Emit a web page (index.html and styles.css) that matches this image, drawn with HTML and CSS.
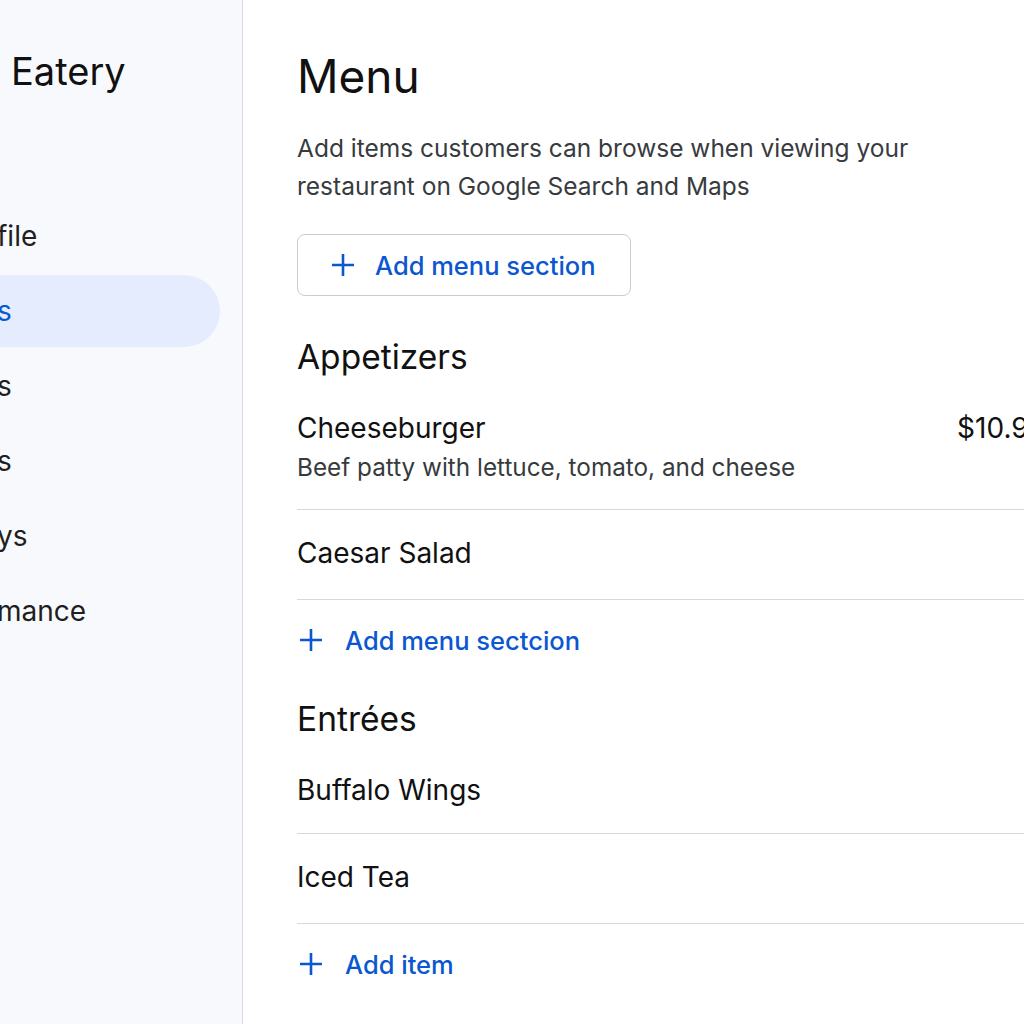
FILE: index.html
```html
<!DOCTYPE html>
<html lang="en">
<head>
<meta charset="utf-8">
<title>Menu</title>
<link rel="stylesheet" href="styles.css">
</head>
<body>
<div class="app">
  <aside class="sidebar">
    <div class="brand">Eatery</div>
    <nav class="nav">
      <div class="nav-item">file</div>
      <div class="nav-item active">s</div>
      <div class="nav-item">s</div>
      <div class="nav-item">s</div>
      <div class="nav-item">ys</div>
      <div class="nav-item">mance</div>
    </nav>
  </aside>
  <main class="main">
    <h1 class="title">Menu</h1>
    <p class="lead">Add items customers can browse when viewing your restaurant on Google Search and Maps</p>
    <button class="outline-btn">
      <svg class="plus" viewBox="0 0 24 24" width="24" height="24"><path d="M12 1v22M1 12h22" stroke="currentColor" stroke-width="2.6" fill="none"/></svg>
      <span>Add menu section</span>
    </button>

    <section class="section">
      <h2 class="section-title">Appetizers</h2>
      <div class="item">
        <div class="item-main">
          <div class="item-name">Cheeseburger</div>
          <div class="item-desc">Beef patty with lettuce, tomato, and cheese</div>
        </div>
        <div class="item-price">$10.99</div>
      </div>
      <div class="item">
        <div class="item-main">
          <div class="item-name">Caesar Salad</div>
        </div>
      </div>
      <button class="text-btn">
        <svg class="plus" viewBox="0 0 24 24" width="24" height="24"><path d="M12 1v22M1 12h22" stroke="currentColor" stroke-width="2.6" fill="none"/></svg>
        <span>Add menu sectcion</span>
      </button>
    </section>

    <section class="section">
      <h2 class="section-title">Entrées</h2>
      <div class="item">
        <div class="item-main">
          <div class="item-name">Buffalo Wings</div>
        </div>
      </div>
      <div class="item">
        <div class="item-main">
          <div class="item-name">Iced Tea</div>
        </div>
      </div>
      <button class="text-btn">
        <svg class="plus" viewBox="0 0 24 24" width="24" height="24"><path d="M12 1v22M1 12h22" stroke="currentColor" stroke-width="2.6" fill="none"/></svg>
        <span>Add item</span>
      </button>
    </section>
  </main>
</div>
</body>
</html>
```

FILE: styles.css
```css
* { box-sizing: border-box; }
html, body { margin: 0; padding: 0; }
body {
  width: 1024px;
  height: 1024px;
  overflow: hidden;
  background: #ffffff;
  font-family: "Inter", "Roboto", "Liberation Sans", sans-serif;
  color: #1f1f1f;
}
.app {
  display: flex;
  height: 1024px;
}
.sidebar {
  width: 243px;
  flex: none;
  background: #f8f9fc;
  border-right: 1px solid #d9dbe0;
  overflow: hidden;
}
.brand {
  font-size: 38px;
  line-height: 46px;
  padding: 48px 0 0 11px;
  color: #111;
}
.nav {
  display: flex;
  flex-direction: column;
  gap: 3px;
  margin-top: 106px;
}
.nav-item {
  height: 72px;
  width: 220px;
  display: flex;
  align-items: center;
  font-size: 28px;
  margin-left: -3px;
  color: #1f1f1f;
}
.nav-item.active {
  background: #e4ecfd;
  color: #0b57d0;
  border-radius: 0 36px 36px 0;
  margin-left: 0;
  width: 220px;
  text-indent: -3px;
}
.main {
  flex: none;
  width: 803px;
  padding-left: 54px;
}
.title {
  margin: 48px 0 0;
  font-size: 46px;
  font-weight: 400;
  line-height: 56px;
  color: #111;
}
.lead {
  margin: 25px 0 0;
  font-size: 24.5px;
  line-height: 38px;
  color: #383b3e;
  width: 660px;
}
.outline-btn {
  margin-top: 29px;
  height: 62px;
  width: 334px;
  border: 1px solid #c9ccd1;
  border-radius: 8px;
  background: #fff;
  display: flex;
  align-items: center;
  gap: 20px;
  padding: 0 0 0 33px;
  font-family: inherit;
  font-size: 25.5px;
  font-weight: 500;
  color: #0b57d0;
  cursor: pointer;
}
.plus { flex: none; display: block; }
.section { margin-top: 41px; }
.section + .section { margin-top: 39px; }
.section-title {
  margin: 0;
  font-size: 33.5px;
  font-weight: 400;
  line-height: 40px;
  color: #111;
}
.item {
  display: flex;
  justify-content: space-between;
  align-items: flex-start;
  border-bottom: 1px solid #d6d8dc;
}
.item-main { padding: 25px 0 28px; }
.section-title + .item .item-main { padding-top: 33px; padding-bottom: 25px; }
.item-name {
  font-size: 28px;
  line-height: 36px;
  color: #111;
}
.item-desc {
  font-size: 24.3px;
  line-height: 40px;
  color: #383b3e;
  margin-top: 1px;
  margin-bottom: -3px;
}
.item-price {
  font-size: 28px;
  line-height: 36px;
  padding-top: 33px;
  color: #111;
}
.text-btn {
  margin-top: 20px;
  background: none;
  border: none;
  padding: 0 0 0 2px;
  display: flex;
  align-items: center;
  gap: 22px;
  font-family: inherit;
  font-size: 25.5px;
  font-weight: 500;
  color: #0b57d0;
  height: 40px;
  cursor: pointer;
}
```
